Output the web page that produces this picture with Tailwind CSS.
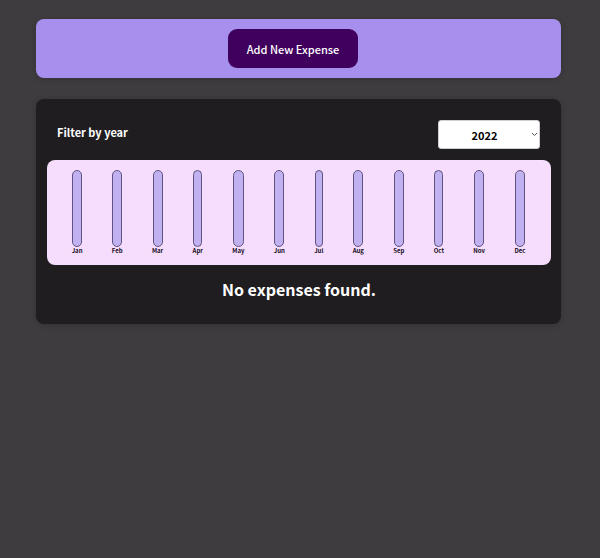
<!DOCTYPE html>
<html lang="en">
<head>
<meta charset="utf-8">
<meta name="viewport" content="width=device-width, initial-scale=1">
<title>Expenses</title>
<script src="https://cdn.jsdelivr.net/npm/@tailwindcss/browser@4"></script>
</head>
<body class="min-h-screen bg-[#3f3c3f] px-9 py-[19px] pr-[39px] font-['Noto_Sans_CJK_JP','Noto_Sans',sans-serif]">
<main class="flex flex-col gap-[21px]">
  <section class="flex justify-center rounded-lg bg-[#a790ed] py-[10px] pr-[22px] pl-[11px] shadow-[0_1px_6px_rgba(0,0,0,0.2)]">
    <button type="button" class="h-[39px] rounded-[9px] bg-[#40005d] px-[19px] text-[11px] leading-4 font-medium text-white">Add New Expense</button>
  </section>

  <section class="rounded-lg bg-[#1f1d20] pt-[21px] pr-[10px] pb-[21px] pl-[11px] shadow-[0_1px_6px_rgba(0,0,0,0.2)]">
    <div class="flex items-center justify-between px-[11px] pb-[11px] pl-[10px] text-white">
      <label for="year" class="pb-[5px] text-[11px] leading-4 font-bold">Filter by year</label>
      <div class="relative">
        <select id="year" class="block h-[29px] w-[102px] appearance-none rounded-[3px] border border-[#d0ced2] bg-white pr-[9px] text-center text-[11px] leading-4 font-bold text-black [text-align-last:center]">
          <option>2022</option>
          <option>2021</option>
          <option>2020</option>
          <option>2019</option>
        </select>
        <svg class="pointer-events-none absolute top-[12px] right-[2px] h-[5px] w-[7px]" viewBox="0 0 7 5" fill="none" stroke="#555" stroke-width="1" aria-hidden="true"><path d="M1 1l2.5 2.5L6 1"/></svg>
      </div>
    </div>

    <div id="chart" class="flex justify-around rounded-lg bg-[#f6ddfd] py-[10px] pr-[11px] pl-[10px] text-[6px] leading-2 font-bold text-[#140a1a]"></div>

    <h2 class="pt-[11px] pb-px text-center text-[16px] leading-[26px] font-bold text-white">No expenses found.</h2>
  </section>
</main>
<script>
  const months = ['Jan', 'Feb', 'Mar', 'Apr', 'May', 'Jun', 'Jul', 'Aug', 'Sep', 'Oct', 'Nov', 'Dec'];
  document.getElementById('chart').innerHTML = months.map(m =>
    `<div class="flex flex-col items-center"><div class="h-[77px] w-[88%] rounded-full border border-[#5f5380] bg-[#c1b1f0]"></div><div>${m}</div></div>`
  ).join('');
</script>
</body>
</html>
